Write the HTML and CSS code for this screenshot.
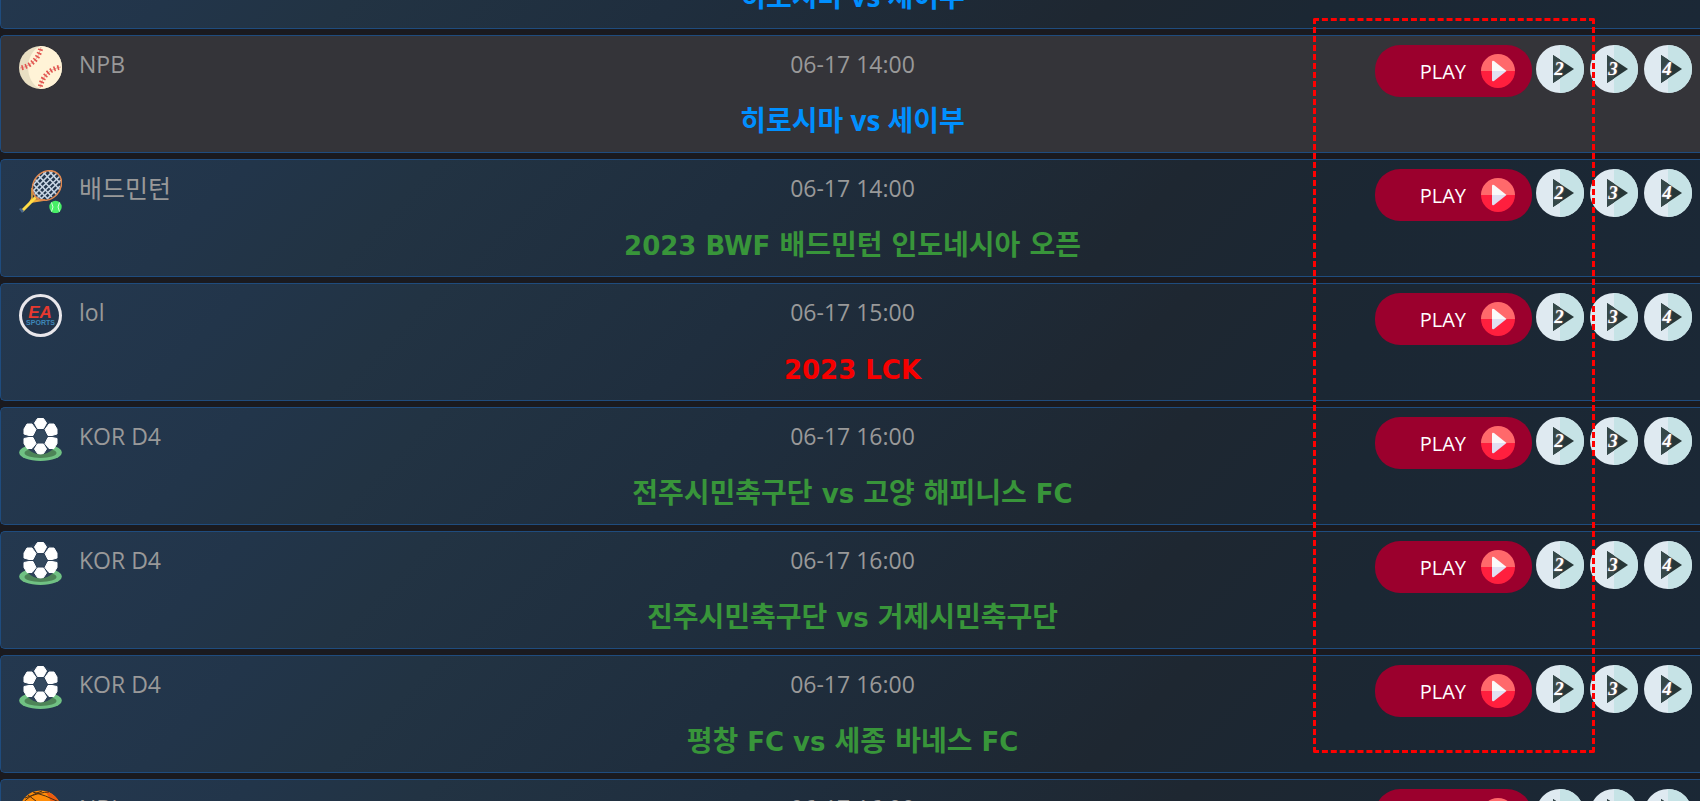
FILE: index.html
```html
<!DOCTYPE html>
<html lang="ko">

<head>
    <meta charset="UTF-8">
    <title>LIVE</title>
    <link rel="stylesheet" href="styles.css">
</head>

<body>
    <!-- icons -->
    <svg class="sprite" aria-hidden="true">
        <symbol id="baseball" viewBox="0 0 43 43">
            <circle cx="21.5" cy="21.5" r="21.5" fill="#e9dfc3" />
            <path d="M21.500 0a21.500 21.500 0 0 1 0 43C5 36 5 7 21.500 0z" fill="#fff3d7" />
            <path d="M22 1C20 12 13 20 1 22M42 21C30 23 23 31 21 42" fill="none" stroke="#e4a99a" />
            <path d="M22 1C20 12 13 20 1 22M42 21C30 23 23 31 21 42" fill="none" stroke="#e2544f" stroke-width="5" stroke-dasharray="1.600 2.200" stroke-dashoffset="-2" />
        </symbol>
        <symbol id="racket" viewBox="0 0 43 43">
            <path d="M13 18v10l-2 4M15 30l11 0-13 2" fill="none" stroke="#f0a93a" stroke-width="1.500" />
            <path d="M3 41L17 27" stroke="#ffdc45" stroke-width="3" />
            <path d="M0 39l2-1 3 3-2 2z" fill="#49668b" />
            <g fill="none" stroke="#c9d6e4" stroke-width="1.600">
                <path d="M16 9l17 18M19 5l19 20M24 2l17 18M30 1l11 12M14 14l15 15M14 20l9 9" />
                <path d="M14 15L27 2M14 21L34 1M15 25L38 3M18 28L41 6M22 29L42 10M28 29L41 16" />
            </g>
            <ellipse cx="28" cy="15.500" rx="16" ry="13.300" transform="rotate(-48 28 15.500)" fill="none" stroke="#e08850" stroke-width="1.500" />
            <circle cx="36.500" cy="37" r="6.200" fill="#47ee66" />
            <path d="M32.500 32.500q3 4.500 0 9M40.500 32.500q-3 4.500 0 9" fill="none" stroke="#d5ffdc" />
        </symbol>
        <symbol id="ea" viewBox="0 0 43 43">
            <circle cx="21.5" cy="21.5" r="20" fill="#23344a" stroke="#e9e7eb" stroke-width="3" />
            <text class="ea-name" x="21" y="23.500" text-anchor="middle">EA</text>
            <text class="ea-sports" x="21.500" y="31" text-anchor="middle">SPORTS</text>
        </symbol>
        <symbol id="soccer" viewBox="0 0 43 43">
            <ellipse cx="21.5" cy="34.500" rx="21.300" ry="8.500" fill="#70c183" />
            <ellipse cx="21.5" cy="35" rx="16" ry="5" fill="#4d8457" />
            <circle cx="21.500" cy="18.500" r="17.800" fill="#2e4259" />
            <g fill="#fff" stroke="#fff" stroke-linejoin="round">
                <path d="M18.500 .500h6l3 4.500-3 5.500h-6l-3-5.500z" />
                <path d="M30 6h5l3 5v5l-5 1.500h-4l-3-6z" />
                <path d="M13 6H8l-3 5v5l5 1.500h4l3-6z" />
                <path d="M29 19.500h4l5 1v5l-3 5h-5l-4-5z" />
                <path d="M14 19.500h-4l-5 1v5l3 5h5l4-5z" />
                <path d="M18.500 26h6l3 5-3 4.500q-3 1-6 0l-3-4.500z" />
            </g>
            <path d="M18 12.500h7l3 6-3 6h-7l-3-6z" fill="#34495e" />
        </symbol>
        <symbol id="basketball" viewBox="0 0 43 43">
            <circle cx="21.5" cy="21.5" r="21" fill="#ff8d0a" />
            <path d="M26 1a21 21 0 0 1 0 41C36 30 36 14 26 1z" fill="#ea5b10" />
            <path d="M9 5Q26 16 36 37M14 2q12 3 26 10M6 8Q22 2 30 2M2 15Q10 5 23 1M1 24Q20 12 42 22" fill="none" stroke="#4b2f14" />
        </symbol>
        <symbol id="play" viewBox="0 0 34 34">
            <path d="M0 17a17 17 0 0 1 34 0z" fill="#ff696b" />
            <path d="M0 17a17 17 0 0 0 34 0z" fill="#ff1f3e" />
            <path d="M11 17V8q0-2 2-1l12.500 10z" fill="#fafafa" />
            <path d="M11 17v9q0 2 2 1l12.500-10z" fill="#e1dff1" />
        </symbol>
        <symbol id="disc" viewBox="0 0 48 48">
            <circle cx="24" cy="24" r="24" fill="#dfeaf1" />
            <path d="M24 0a24 24 0 0 1 0 48z" fill="#c6e3e6" />
            <path d="M17 10v28l21-14z" fill="#273637" />
            <path d="M17 10v28l7-4.500v-19z" fill="#354849" />
        </symbol>
    </svg>

    <main class="schedule">
        <article class="game past">
            <h2 class="npb">히로시마 vs 세이부</h2>
        </article>

        <article class="game active">
            <div class="league"><svg><use href="#baseball" /></svg>NPB</div>
            <div class="info">
                <time>06-17 14:00</time>
                <h2 class="npb">히로시마 vs 세이부</h2>
            </div>
            <div class="links">
                <button class="play">PLAY <svg><use href="#play" /></svg></button>
                <button class="channel"><svg><use href="#disc" /></svg><span>2</span></button>
                <button class="channel"><svg><use href="#disc" /></svg><span>3</span></button>
                <button class="channel"><svg><use href="#disc" /></svg><span>4</span></button>
            </div>
        </article>

        <article class="game">
            <div class="league korean"><svg><use href="#racket" /></svg>배드민턴</div>
            <div class="info">
                <time>06-17 14:00</time>
                <h2><span class="latin">2023 BWF </span>배드민턴<span class="latin"> </span>인도네시아<span class="latin"> </span>오픈</h2>
            </div>
            <div class="links">
                <button class="play">PLAY <svg><use href="#play" /></svg></button>
                <button class="channel"><svg><use href="#disc" /></svg><span>2</span></button>
                <button class="channel"><svg><use href="#disc" /></svg><span>3</span></button>
                <button class="channel"><svg><use href="#disc" /></svg><span>4</span></button>
            </div>
        </article>

        <article class="game">
            <div class="league"><svg><use href="#ea" /></svg>lol</div>
            <div class="info">
                <time>06-17 15:00</time>
                <h2 class="lol"><span class="latin">2023 LCK</span></h2>
            </div>
            <div class="links">
                <button class="play">PLAY <svg><use href="#play" /></svg></button>
                <button class="channel"><svg><use href="#disc" /></svg><span>2</span></button>
                <button class="channel"><svg><use href="#disc" /></svg><span>3</span></button>
                <button class="channel"><svg><use href="#disc" /></svg><span>4</span></button>
            </div>
        </article>

        <article class="game">
            <div class="league"><svg><use href="#soccer" /></svg>KOR D4</div>
            <div class="info">
                <time>06-17 16:00</time>
                <h2>전주시민축구단<span class="latin"> vs </span>고양<span class="latin"> </span>해피니스<span class="latin"> FC</span></h2>
            </div>
            <div class="links">
                <button class="play">PLAY <svg><use href="#play" /></svg></button>
                <button class="channel"><svg><use href="#disc" /></svg><span>2</span></button>
                <button class="channel"><svg><use href="#disc" /></svg><span>3</span></button>
                <button class="channel"><svg><use href="#disc" /></svg><span>4</span></button>
            </div>
        </article>

        <article class="game">
            <div class="league"><svg><use href="#soccer" /></svg>KOR D4</div>
            <div class="info">
                <time>06-17 16:00</time>
                <h2>진주시민축구단<span class="latin"> vs </span>거제시민축구단</h2>
            </div>
            <div class="links">
                <button class="play">PLAY <svg><use href="#play" /></svg></button>
                <button class="channel"><svg><use href="#disc" /></svg><span>2</span></button>
                <button class="channel"><svg><use href="#disc" /></svg><span>3</span></button>
                <button class="channel"><svg><use href="#disc" /></svg><span>4</span></button>
            </div>
        </article>

        <article class="game">
            <div class="league"><svg><use href="#soccer" /></svg>KOR D4</div>
            <div class="info">
                <time>06-17 16:00</time>
                <h2>평창<span class="latin"> FC vs </span>세종<span class="latin"> </span>바네스<span class="latin"> FC</span></h2>
            </div>
            <div class="links">
                <button class="play">PLAY <svg><use href="#play" /></svg></button>
                <button class="channel"><svg><use href="#disc" /></svg><span>2</span></button>
                <button class="channel"><svg><use href="#disc" /></svg><span>3</span></button>
                <button class="channel"><svg><use href="#disc" /></svg><span>4</span></button>
            </div>
        </article>

        <article class="game">
            <div class="league"><svg><use href="#basketball" /></svg>NBL</div>
            <div class="info">
                <time>06-17 16:00</time>
            </div>
            <div class="links">
                <button class="play">PLAY <svg><use href="#play" /></svg></button>
                <button class="channel"><svg><use href="#disc" /></svg></button>
                <button class="channel"><svg><use href="#disc" /></svg></button>
                <button class="channel"><svg><use href="#disc" /></svg></button>
            </div>
        </article>
    </main>

    <div class="marker"></div>
</body>

</html>
```
FILE: styles.css
```css
* {
    box-sizing: border-box;
}

body {
    margin: 0;
    height: 100vh;
    overflow: hidden;
    position: relative;
    background: #1a1a1f;
    color: #999;
    font-family: "Open Sans", "Noto Sans CJK KR", sans-serif;
    font-size: 23px;
}

.sprite {
    position: absolute;
    width: 0;
    height: 0;
}

/* the list is scrolled: the first game is mostly above the window */
.schedule {
    display: flex;
    flex-direction: column;
    gap: 6px;
    margin-top: -89px;
}

.game {
    display: grid;
    grid-template-columns: 1fr auto 1fr;
    align-items: start;
    min-height: 118px;
    padding: 9px 8px 0 12px;
    border: 1px solid #1f4c7e;
    border-right: none;
    border-radius: 5px 0 0 5px;
    background: linear-gradient(135deg, #24384f 0%, #22354a 14%, #223343 24%, #1f2e3e 42%, #1e2731 66%, #1b2733 78%, #1b2836 100%);
}

.game.active {
    background: #343439;
}

.game.past {
    grid-template-columns: auto;
    justify-content: center;
    padding-top: 47px;
}

.league {
    display: flex;
    gap: 17px;
    padding-left: 6px;
    line-height: 38px;
}

.league.korean {
    font-size: 25px;
}

.league svg {
    width: 43px;
    height: 43px;
    margin-top: 1px;
}

.ea-name {
    font: italic bold 17px "Liberation Sans", sans-serif;
    fill: #e8392f;
}

.ea-sports {
    font: bold 7px "Liberation Sans", sans-serif;
    fill: #3f87b9;
}

.info {
    text-align: center;
    line-height: 38px;
}

time {
    display: block;
}

h2 {
    margin: 19px 0 0;
    color: #38953a;
    font-size: 28px;
    font-weight: bold;
    line-height: 36px;
}

.latin {
    font-family: "DejaVu Sans", sans-serif;
    font-size: 26px;
}

.npb {
    color: #008fff;
}

.lol {
    color: #f60000;
}

.links {
    display: flex;
    justify-content: flex-end;
    gap: 6px;
}

button {
    border: none;
    padding: 0;
    cursor: pointer;
}

.play {
    display: flex;
    align-items: center;
    justify-content: flex-end;
    gap: 15px;
    width: 157px;
    height: 52px;
    margin-right: -2px;
    padding-right: 17px;
    border-radius: 25px;
    background: #9b002d;
    color: #fff;
    font-family: "Open Sans", sans-serif;
    font-size: 20px;
}

.play svg {
    width: 34px;
    height: 34px;
}

.channel {
    display: grid;
    place-items: center;
    width: 48px;
    height: 48px;
    background: none;
}

.channel svg,
.channel span {
    grid-area: 1 / 1;
}

.channel svg {
    width: 48px;
    height: 48px;
}

.channel span {
    padding-right: 2px;
    color: #fff;
    font: italic bold 19px "Liberation Serif", serif;
    text-shadow: 0 0 2px #a88;
}

.marker {
    position: absolute;
    top: 18px;
    right: 105px;
    width: 282px;
    height: 735px;
    border: 3px dashed #f00;
    border-radius: 2px;
    pointer-events: none;
}
```
